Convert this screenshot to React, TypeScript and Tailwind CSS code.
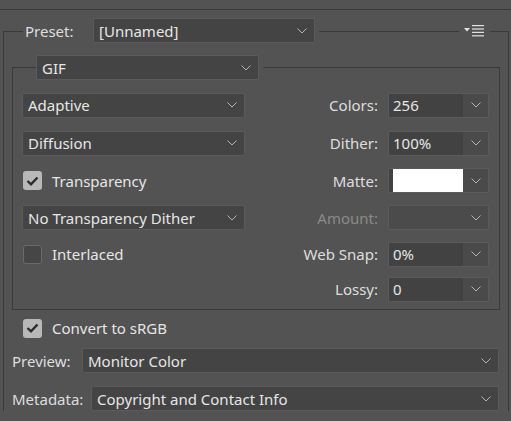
import React from 'react';

const LINE = 'border-[#3a3a3a]';

const Chevron: React.FC = () => (
  <svg width="10" height="6" viewBox="0 0 10 6" className="shrink-0">
    <polyline points="0.5,0.5 5,5 9.5,0.5" fill="none" stroke="#b4b4b4" strokeWidth="1" />
  </svg>
);

const MenuIcon: React.FC = () => (
  <svg width="21" height="12" viewBox="0 0 21 12" className="shrink-0">
    <polygon points="0,3 6,3 3,6.5" fill="#e2e2e2" />
    <rect x="8" y="0" width="12" height="1.2" fill="#e2e2e2" />
    <rect x="8" y="3.4" width="12" height="1.2" fill="#e2e2e2" />
    <rect x="8" y="6.8" width="12" height="1.2" fill="#e2e2e2" />
    <rect x="8" y="10.2" width="12" height="1.2" fill="#e2e2e2" />
  </svg>
);

// full width select box
const Dropdown: React.FC<{ value: string; className?: string }> = ({ value, className = '' }) => (
  <div
    className={`flex h-[25px] items-center justify-between rounded-[2px] border border-[#5b5b5b] bg-[#444444] pl-[5px] pr-[7px] text-[#e6e6e6] ${className}`}
  >
    <span className="whitespace-nowrap leading-[20px]">{value}</span>
    <Chevron />
  </div>
);

// small editable combo on the right
const Combo: React.FC<{ value?: string; swatch?: boolean; disabled?: boolean }> = ({ value, swatch, disabled }) => (
  <div className="flex h-[25px] w-[101px] rounded-[2px] border border-[#5b5b5b]">
    <div
      className={`flex flex-1 items-center pl-[4px] leading-[20px] text-[#e6e6e6] ${
        disabled ? 'bg-[#4b4b4b]' : 'bg-[#424242]'
      }`}
    >
      {swatch ? <div className="h-[23px] w-full bg-white" /> : value}
    </div>
    <div className={`flex w-[25px] items-center justify-center ${disabled ? 'bg-[#4b4b4b]' : 'bg-[#4a4a4a]'}`}>
      <Chevron />
    </div>
  </div>
);

const Checkbox: React.FC<{ checked?: boolean; label: string }> = ({ checked, label }) => (
  <div className="flex items-center gap-[10px]">
    {checked ? (
      <div className="flex h-[19px] w-[19px] items-center justify-center rounded-[3px] bg-[#b8b8b8]">
        <svg width="13" height="10" viewBox="0 0 13 10">
          <polyline points="1.5,5 5,8.3 11.5,1.5" fill="none" stroke="#2c2c2c" strokeWidth="2.4" />
        </svg>
      </div>
    ) : (
      <div className="h-[19px] w-[19px] rounded-[3px] border border-[#6a6a6a] bg-[#464646]" />
    )}
    <span className="whitespace-nowrap leading-[20px] text-[#e6e6e6]">{label}</span>
  </div>
);

const Field: React.FC<{ label: string; disabled?: boolean; children: React.ReactNode }> = ({ label, disabled, children }) => (
  <div className="flex items-center justify-end gap-[10px]">
    <span className={`whitespace-nowrap leading-[20px] ${disabled ? 'text-[#8a8a8a]' : 'text-[#dedede]'}`}>{label}</span>
    {children}
  </div>
);

const App: React.FC = () => {
  return (
    <div className="h-[421px] w-[511px] overflow-hidden bg-[#535353] font-['Noto_Sans',sans-serif] text-[15px]">
      {/* top divider */}
      <div className="mt-[9px] h-px bg-[#3a3a3a]" />

      <div className="ml-[3px] mt-[8px] w-[506px]">
        {/* Preset header */}
        <div className="flex h-[25px] items-center">
          <div className={`h-[12px] w-[20px] self-end border-l border-t ${LINE}`} />
          <span className="ml-[2px] w-[68px] shrink-0 whitespace-nowrap leading-[20px] text-[#dedede]">Preset:</span>
          <Dropdown value="[Unnamed]" className="w-[222px]" />
          <div className={`ml-[4px] h-[12px] flex-1 self-end border-t ${LINE}`} />
          <div className="mx-[5px]">
            <MenuIcon />
          </div>
          <div className={`h-[12px] w-[19px] self-end border-r border-t ${LINE}`} />
        </div>

        <div className={`border-x ${LINE} px-[8px] pt-[12px]`}>
          {/* GIF group */}
          <div className="flex h-[25px] items-center">
            <div className={`h-[13px] w-[24px] self-end border-l border-t ${LINE}`} />
            <Dropdown value="GIF" className="w-[223px]" />
            <div className={`ml-[4px] h-[13px] flex-1 self-end border-r border-t ${LINE}`} />
          </div>

          <div
            className={`grid grid-cols-[223px_1fr] grid-rows-[38px_38px_37px_37px_36px_34px] items-center border-x border-b ${LINE} pb-[3px] pl-[9px] pr-[10px] pt-[6px]`}
          >
            <Dropdown value="Adaptive" />
            <Field label="Colors:">
              <Combo value="256" />
            </Field>

            <Dropdown value="Diffusion" />
            <Field label="Dither:">
              <Combo value="100%" />
            </Field>

            <div className="pl-[1px]">
              <Checkbox checked label="Transparency" />
            </div>
            <Field label="Matte:">
              <Combo swatch />
            </Field>

            <Dropdown value="No Transparency Dither" />
            <Field label="Amount:" disabled>
              <Combo disabled />
            </Field>

            <div className="pl-[1px]">
              <Checkbox label="Interlaced" />
            </div>
            <Field label="Web Snap:">
              <Combo value="0%" />
            </Field>

            <div />
            <Field label="Lossy:">
              <Combo value="0" />
            </Field>
          </div>

          {/* bottom options */}
          <div className="flex h-[36px] items-center pl-[11px]">
            <Checkbox checked label="Convert to sRGB" />
          </div>
          <div className="mt-[2px] flex items-center pr-[1px]">
            <span className="w-[70px] shrink-0 whitespace-nowrap leading-[20px] text-[#dedede]">Preview:</span>
            <Dropdown value="Monitor Color" className="flex-1" />
          </div>
          <div className="mt-[13px] flex items-center pr-[1px]">
            <span className="w-[79px] shrink-0 whitespace-nowrap leading-[20px] text-[#dedede]">Metadata:</span>
            <Dropdown value="Copyright and Contact Info" className="flex-1" />
          </div>
        </div>
      </div>
    </div>
  );
};

export default App;
